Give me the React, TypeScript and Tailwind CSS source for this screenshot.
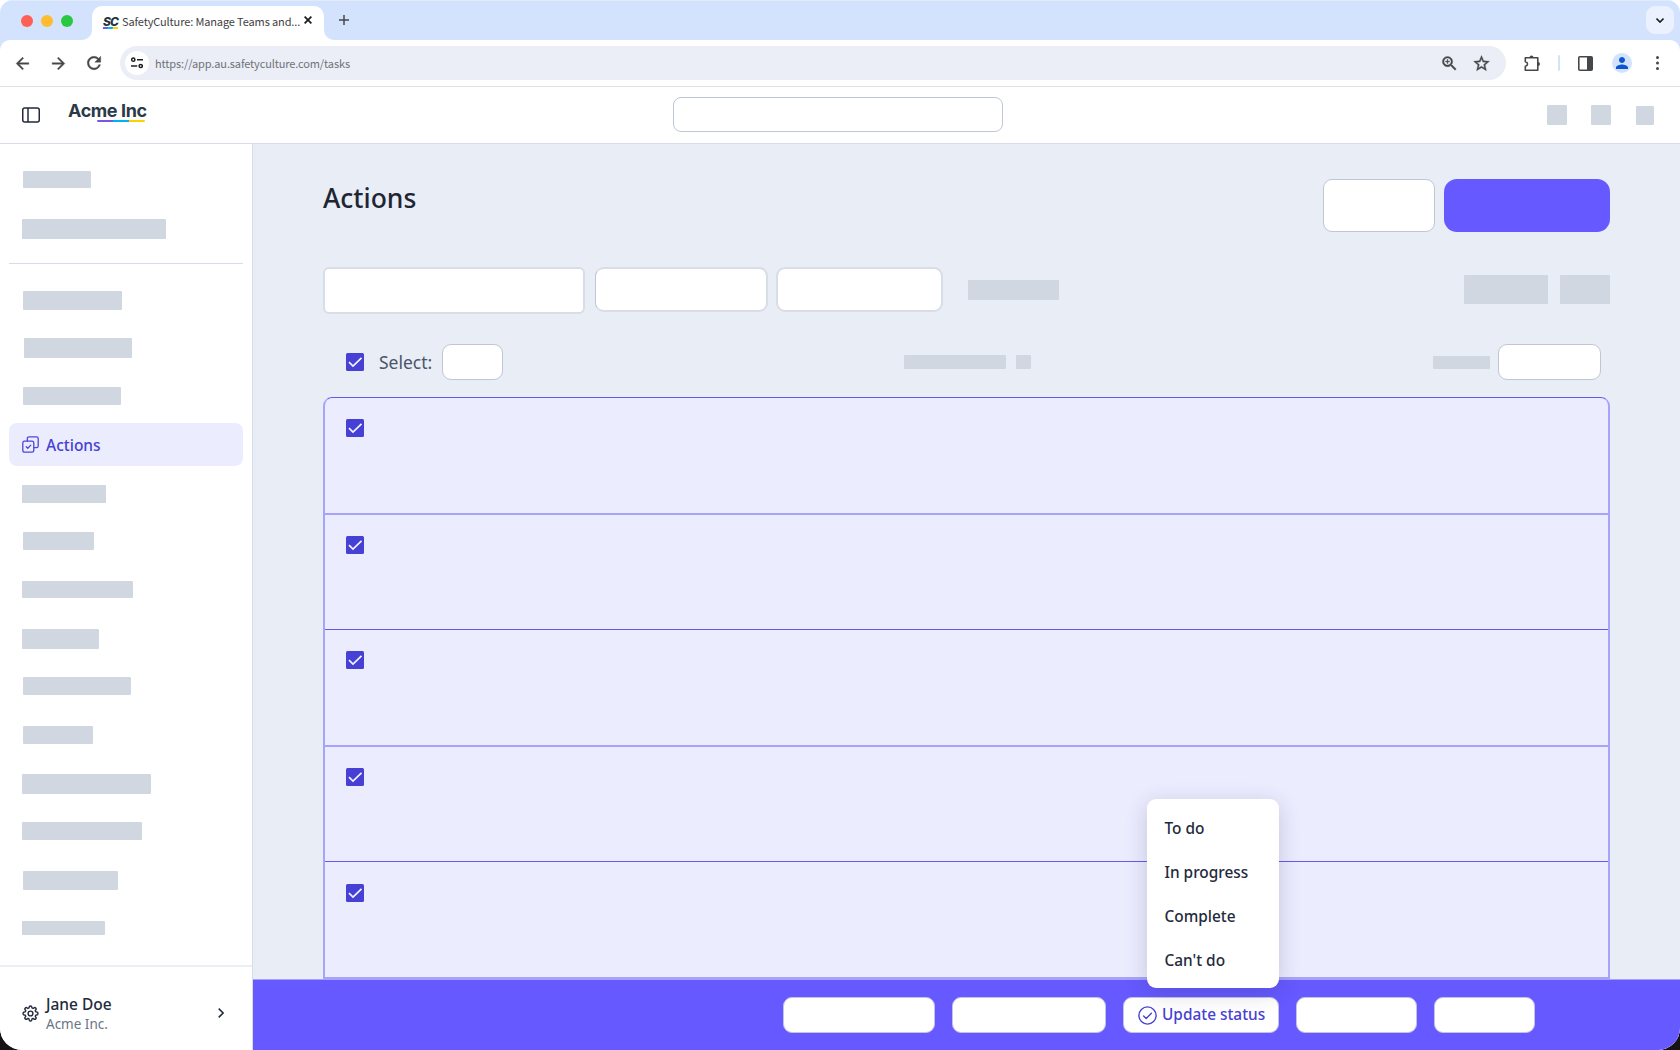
import React from "react";
import {
  MdArrowBack,
  MdArrowForward,
  MdRefresh,
  MdOutlineZoomIn,
  MdStarBorder,
  MdPerson,
} from "react-icons/md";

interface IBlock {
  kind: string;
  style: string;
}

interface IRow {
  style: string;
  check: string;
}

const sidebarTop: IBlock[] = [
  { kind: "bar", style: "mt-[27px] ml-[23px] h-[17px] w-[68px]" },
  { kind: "bar", style: "mt-[31px] ml-[22px] h-5 w-36" },
  { kind: "line", style: "" },
  { kind: "bar", style: "mt-[27px] ml-[23px] h-[19px] w-[99px]" },
  { kind: "bar", style: "mt-7 ml-6 h-5 w-27" },
  { kind: "bar", style: "mt-[29px] ml-[23px] h-[18px] w-[98px]" },
  { kind: "active", style: "" },
  { kind: "bar", style: "mt-[19px] ml-[22px] h-[18px] w-21" },
  { kind: "bar", style: "mt-[29px] ml-[23px] h-[18px] w-[71px]" },
  { kind: "bar", style: "mt-[31px] ml-[22px] h-[17px] w-[111px]" },
  { kind: "bar", style: "mt-[31px] ml-[22px] h-5 w-[77px]" },
  { kind: "bar", style: "mt-7 ml-[23px] h-[18px] w-27" },
  { kind: "bar", style: "mt-[31px] ml-[23px] h-[18px] w-[70px]" },
  { kind: "bar", style: "mt-[30px] ml-[22px] h-5 w-[129px]" },
  { kind: "bar", style: "mt-7 ml-[22px] h-[18px] w-30" },
  { kind: "bar", style: "mt-[31px] ml-[23px] h-[19px] w-[95px]" },
  { kind: "bar", style: "mt-[31px] ml-[22px] h-3.5 w-[83px]" },
];

const rows: IRow[] = [
  { style: "h-[117px] border-b-2 border-[#a7a2fb]", check: "mt-[21px]" },
  { style: "h-[115px] border-b border-[#6559e8]", check: "mt-[21px]" },
  { style: "h-[117px] border-b-2 border-[#a7a2fb]", check: "mt-[21px]" },
  { style: "h-[115px] border-b border-[#6559f0]", check: "mt-[21px]" },
  { style: "h-[117px] border-b-2 border-[#a7a2fb]", check: "mt-[22px]" },
];

const statuses = ["To do", "In progress", "Complete", "Can't do"];

// slightly bolder than the stock material icons
const boldIcon = "[&>path:last-child]:stroke-current [&>path:last-child]:stroke-[0.5]";

const Block = ({ className }: { className: string }) => (
  <div className={`shrink-0 rounded-[1px] bg-[#d0d7e1] ${className}`} />
);

const Box = ({ className }: { className: string }) => (
  <div className={`shrink-0 bg-white ${className}`} />
);

const Checkbox = ({ className }: { className?: string }) => (
  <svg className={`h-[18px] w-[18px] shrink-0 ${className || ""}`} viewBox="0 0 18 18" fill="none">
    <rect width="18" height="18" rx="1.5" fill="#4740d4" />
    <path d="M3 9.2 7 13.1 15.5 4.8" stroke="#f3f3ff" strokeWidth="1.7" />
  </svg>
);

const ActionsIcon = () => (
  <svg className="h-[17px] w-[17px]" viewBox="0 0 17 17" fill="none" stroke="#4f46d8" strokeWidth="1.3" strokeLinecap="round" strokeLinejoin="round">
    <rect x="0.8" y="5.2" width="11" height="11" rx="1.8" />
    <path d="M5.3 5V2.5A1.7 1.7 0 0 1 7 .8h7.5a1.7 1.7 0 0 1 1.7 1.7V10a1.7 1.7 0 0 1-1.7 1.7h-2.4" />
    <path d="m4.2 10.7 1.6 1.5 3-3.1" />
  </svg>
);

const GearIcon = () => (
  <svg className="h-[17px] w-[17px]" viewBox="0 0 24 24" fill="none" stroke="#232a3b" strokeWidth="2" strokeLinejoin="round">
    <circle cx="12" cy="12" r="3.4" />
    <path d="M10.1 3.2a1.9 1.9 0 0 1 3.8 0l.2 1 1.6.7.9-.6a1.9 1.9 0 0 1 2.7 2.7l-.6.9.7 1.6 1 .3a1.9 1.9 0 0 1 0 4.4l-1 .2-.7 1.6.6.9a1.9 1.9 0 0 1-2.7 2.7l-.9-.6-1.6.7-.2 1a1.9 1.9 0 0 1-3.8 0l-.2-1-1.6-.7-.9.6a1.9 1.9 0 0 1-2.7-2.7l.6-.9-.7-1.6-1-.2a1.9 1.9 0 0 1 0-4.4l1-.3.7-1.6-.6-.9a1.9 1.9 0 0 1 2.7-2.7l.9.6 1.6-.7z" />
  </svg>
);

function TabStrip() {
  return (
    <div className="flex h-10 shrink-0 border-t border-[#e3ebfa] bg-[#d3e3fd]">
      <div className="flex w-[82px] items-center gap-2 pl-[21px]">
        <div className="h-3 w-3 rounded-full bg-[#ff5f57]" />
        <div className="h-3 w-3 rounded-full bg-[#febc2e]" />
        <div className="h-3 w-3 rounded-full bg-[#28c840]" />
      </div>
      <div className="flex w-2.5 items-end">
        <svg className="h-2.5 w-2.5" viewBox="0 0 10 10">
          <path d="M10 0v10H0A10 10 0 0 0 10 0z" fill="#fff" />
        </svg>
      </div>
      <div className="mt-[5px] flex h-[34px] w-[232px] rounded-t-[10px] bg-white pl-[11px]">
        <div className="flex w-[19px] flex-col pt-[9px]">
          <div className="font-['Inter'] text-[12px] leading-[13px] font-extrabold tracking-[-1px] text-[#26333f] italic">SC</div>
          <div className="-mt-px flex h-[1.5px] w-[15px] -skew-x-12">
            <div className="flex-1 bg-[#6559ff]" />
            <div className="flex-1 bg-[#00b8f5]" />
            <div className="flex-1 bg-[#ffd100]" />
          </div>
        </div>
        <div className="h-8 w-[180px] font-['Noto_Sans_CJK_SC',sans-serif] text-[11px] leading-[31px] tracking-[-0.13px] whitespace-nowrap text-[#3f4246]">
          SafetyCulture: Manage Teams and...
        </div>
        <svg className="mt-[10px] ml-[2px] h-2 w-2" viewBox="0 0 8 8" stroke="#1f1f1f" strokeWidth="1.8">
          <path d="m.6.6 6.8 6.8M7.4.6.6 7.4" />
        </svg>
      </div>
      <div className="flex w-2.5 items-end">
        <svg className="h-2.5 w-2.5" viewBox="0 0 10 10">
          <path d="M0 0v10h10A10 10 0 0 1 0 0z" fill="#fff" />
        </svg>
      </div>
      <svg className="mt-3.5 ml-[5px] h-2.5 w-2.5" viewBox="0 0 10 10" stroke="#45484b" strokeWidth="1.5">
        <path d="M5 0v10M0 5h10" />
      </svg>
      <div className="mt-[5px] mr-1.5 ml-auto flex h-7 w-7 items-center justify-center rounded-[9px] bg-[#ebf1fe]">
        <svg className="h-[5px] w-2" viewBox="0 0 8 5" fill="none" stroke="#1f1f1f" strokeWidth="1.6">
          <path d="m.5.6 3.5 3.5L7.5.6" />
        </svg>
      </div>
    </div>
  );
}

function Toolbar() {
  return (
    <div className="bg-[#d3e3fd]">
      <div className="flex h-[47px] items-center rounded-t-[10px] border-b border-[#e0e0e2] bg-white text-[#45484b]">
        <MdArrowBack className={`ml-[13px] ${boldIcon}`} size={19} />
        <MdArrowForward className={`ml-[16.5px] ${boldIcon}`} size={19} />
        <MdRefresh className={`ml-[16.5px] ${boldIcon}`} size={20} />
        <div className="ml-[16px] flex h-[34px] w-[1386px] items-center rounded-full bg-[#ebeef7]">
          <div className="ml-[5px] flex h-6 w-6 items-center justify-center rounded-full bg-white">
            <svg className="h-3 w-3" viewBox="0 0 12 12" fill="none" stroke="#1f1f1f" strokeWidth="1.5">
              <circle cx="2.3" cy="2.7" r="1.6" />
              <path d="M6 2.7h6M0 9h6.2" />
              <circle cx="9.7" cy="9" r="1.6" />
            </svg>
          </div>
          <div className="ml-1.5 font-['Noto_Sans_CJK_SC',sans-serif] text-[11px] leading-5 tracking-[-0.13px] text-[#6f7276]">
            https://app.au.safetyculture.com/tasks
          </div>
          <MdOutlineZoomIn className={`ml-auto ${boldIcon}`} size={19} />
          <MdStarBorder className={`mr-[15px] ml-[13px] ${boldIcon}`} size={19} />
        </div>
        <svg className="ml-[18px] h-[17px] w-[17px]" viewBox="0 0 17 17">
          <path d="M1.3 2.8h12.5v12.4H1.3v-3.9c3-.7 3-3.9 0-4.6z" fill="none" stroke="#45484b" strokeWidth="1.6" strokeLinejoin="round" />
          <path d="M5.5 2.5a2 2 0 0 1 4 0zM14 7a2 2 0 0 1 0 4z" fill="#45484b" />
        </svg>
        <div className="ml-[17px] h-4 w-0.5 rounded-full bg-[#d3e3fd]" />
        <svg className="ml-[18px] h-[15px] w-[15px]" viewBox="0 0 15 15">
          <rect x="0.8" y="0.8" width="13.4" height="13.4" rx="1" fill="none" stroke="#45484b" strokeWidth="1.6" />
          <path d="M9 1h5v13H9z" fill="#45484b" />
        </svg>
        <div className="ml-[19px] flex h-5 w-5 items-center justify-center rounded-full bg-[#d3e3fd]">
          <MdPerson size={18} color="#0b57d0" />
        </div>
        <svg className="ml-6 h-3.5 w-[3px]" viewBox="0 0 3 14" fill="#45484b">
          <circle cx="1.5" cy="1.5" r="1.5" />
          <circle cx="1.5" cy="7" r="1.5" />
          <circle cx="1.5" cy="12.5" r="1.5" />
        </svg>
      </div>
    </div>
  );
}

function Header() {
  return (
    <div className="flex h-[57px] shrink-0 border-b border-[#d9dce8] bg-white">
      <svg className="mt-5 ml-[22px] h-4 w-[18px]" viewBox="0 0 18 16" fill="none" stroke="#232a3b" strokeWidth="1.5">
        <rect x="0.75" y="1.1" width="16.5" height="14" rx="2" />
        <path d="M6 1v14" />
      </svg>
      <div className="mt-[13px] ml-7 w-[81px]">
        <div className="h-5 font-['Inter'] text-[18px] leading-[22px] font-bold tracking-[-0.4px] whitespace-nowrap text-[#2c3a47]">
          Acme Inc
        </div>
        <div className="ml-[29px] flex h-0.5 w-12 overflow-hidden rounded-full">
          <div className="flex-1 bg-[#7a55e6]" />
          <div className="flex-1 bg-[#00b1f5]" />
          <div className="flex-1 bg-[#ffd100]" />
        </div>
      </div>
      <Box className="mt-2.5 ml-[524px] h-[35px] w-[330px] rounded-lg border border-[#bfc6d6]" />
      <Block className="mt-[18px] ml-auto h-5 w-5" />
      <Block className="mt-[18px] ml-6 h-5 w-5" />
      <Block className="mt-[19px] mr-[26px] ml-[25px] h-[19px] w-[18px]" />
    </div>
  );
}

function Sidebar() {
  return (
    <div className="flex w-[253px] shrink-0 flex-col border-r border-[#d9dce8] bg-white">
      {sidebarTop?.map((item: IBlock, i: number) => {
        if (item.kind === "line") {
          return <div key={i} className="mx-[9px] mt-6 h-px shrink-0 bg-[#d9dce8]" />;
        }
        if (item.kind === "active") {
          return (
            <div
              key={i}
              className="mx-[9px] mt-[18px] flex h-[43px] shrink-0 items-center gap-[7px] rounded-lg bg-[#ebecfe] pl-[13px] text-[15.5px] font-medium text-[#4740d4]"
            >
              <ActionsIcon />
              <span className="pt-0.5">Actions</span>
            </div>
          );
        }
        return <Block key={i} className={item.style} />;
      })}
      <div className="mt-auto flex h-[85px] shrink-0 items-center border-t-2 border-[#eceef6] pt-[9px] pl-[22px]">
        <GearIcon />
        <div className="ml-[7px]">
          <div className="text-[15.5px] leading-5 font-medium text-[#232a3b]">Jane Doe</div>
          <div className="h-[18px] text-[13.5px] leading-5 text-[#687586]">Acme Inc.</div>
        </div>
        <svg className="mr-7 ml-auto h-2.5 w-1.5" viewBox="0 0 6 10" fill="none" stroke="#232a3b" strokeWidth="1.5">
          <path d="m.7.6 4.4 4.4L.7 9.4" />
        </svg>
      </div>
    </div>
  );
}

function ActionsPage() {
  return (
    <div className="min-h-0 flex-1 px-[70px] pt-[35px]">
      <div className="flex h-[53px]">
        <h1 className="text-[26.5px] leading-[38px] font-medium text-[#1f2533]">Actions</h1>
        <Box className="ml-auto h-[53px] w-[112px] rounded-[9px] border border-[#bfc6d6]" />
        <div className="ml-[9px] h-[53px] w-[166px] rounded-[13px] bg-[#6559ff]" />
      </div>
      <div className="mt-[35px] flex h-[47px]">
        <Box className="h-[47px] w-[262px] rounded-md border-2 border-[#d9dde8]" />
        <Box className="ml-2.5 h-[45px] w-[173px] rounded-[9px] border-2 border-l border-[#d9dde8] border-l-[#bfc6d6]" />
        <Box className="ml-2 h-[45px] w-[167px] rounded-[9px] border-2 border-[#d9dde8]" />
        <Block className="mt-[13px] ml-[25px] h-5 w-[91px]" />
        <Block className="mt-2 ml-auto h-[29px] w-21" />
        <Block className="mt-2 ml-3 h-[29px] w-[50px]" />
      </div>
      <div className="mt-[30px] flex h-9 items-center">
        <Checkbox className="-mt-px ml-[23px]" />
        <div className="ml-[15px] w-[63px] text-[17.5px] leading-9 text-[#4a5568]">Select:</div>
        <Box className="h-9 w-[61px] rounded-[9px] border border-[#bfc6d6]" />
        <Block className="ml-[401px] h-3.5 w-[102px]" />
        <Block className="ml-2.5 h-3.5 w-[15px]" />
        <Block className="ml-auto h-[13px] w-[57px]" />
        <Box className="mr-[9px] ml-2 h-9 w-[103px] rounded-[9px] border border-[#bfc6d6]" />
      </div>
      <div className="mt-[17px] rounded-t-[9px] border-x-2 border-t border-x-[#a7a2fb] border-t-[#6559e8] bg-[#ebecfe]">
        {rows?.map((row: IRow, i: number) => (
          <div className={row.style} key={i}>
            <div className="flex pl-[21px]">
              <Checkbox className={row.check} />
            </div>
          </div>
        ))}
      </div>
    </div>
  );
}

function BulkBar() {
  return (
    <div className="flex h-[71px] shrink-0 border-t border-[#a7a2fb] bg-[#6559ff] pt-[17px] pl-[530px]">
      <Box className="h-9 w-[152px] rounded-[9px] border border-[#c3c4e4]" />
      <Box className="ml-[17px] h-9 w-[154px] rounded-[9px] border border-[#c3c4e4]" />
      <div className="relative ml-[17px] flex h-9 w-[156px] items-center rounded-[9px] border border-[#c3c4e4] bg-white pl-3.5 text-[15.4px] font-medium whitespace-nowrap text-[#4740d4]">
        <svg className="mr-[5px] h-[19px] w-[19px]" viewBox="0 0 19 19" fill="none" stroke="#4740d4" strokeWidth="1.4" strokeLinecap="round" strokeLinejoin="round">
          <circle cx="9.5" cy="9.5" r="8.6" />
          <path d="m5.6 9.9 2.6 2.5 5.2-5.2" />
        </svg>
        Update status
        <div className="absolute right-[-1px] bottom-[44px] h-[189px] w-[132px] rounded-[9px] bg-white pt-[7px] pl-[17.5px] text-[#232a3b] shadow-[0_5px_22px_rgba(40,45,80,0.2)]">
          {statuses?.map((status: string, i: number) => (
            <div className="h-11 leading-[46px]" key={i}>
              {status}
            </div>
          ))}
        </div>
      </div>
      <Box className="ml-[17px] h-9 w-[121px] rounded-[9px] border border-[#c3c4e4]" />
      <Box className="ml-[17px] h-9 w-[101px] rounded-[9px] border border-[#c3c4e4]" />
    </div>
  );
}

export default function App() {
  return (
    <div className="h-[1050px] w-[1680px] bg-linear-to-b from-white from-50% to-[#171214] to-50%">
      <div className="flex h-full flex-col overflow-hidden rounded-t-[13px] rounded-b-[22px] bg-white font-['Noto_Sans',sans-serif]">
        <TabStrip />
        <Toolbar />
        <Header />
        <div className="flex min-h-0 flex-1">
          <Sidebar />
          <div className="flex min-w-0 flex-1 flex-col bg-[#e8edf6]">
            <ActionsPage />
            <BulkBar />
          </div>
        </div>
      </div>
    </div>
  );
}
